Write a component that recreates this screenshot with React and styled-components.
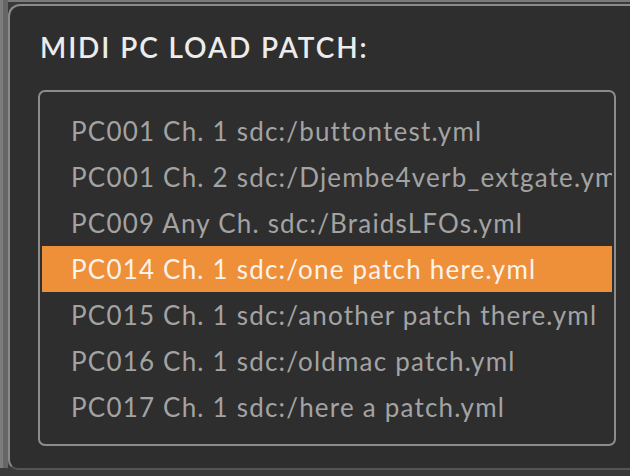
import React from "react";
import styled, { createGlobalStyle } from "styled-components";

const Global = createGlobalStyle`
  html, body {
    margin: 0;
    padding: 0;
    width: 630px;
    height: 476px;
    overflow: hidden;
    background: #1c1c1c;
  }
`;

const Frame = styled.div`
  width: 630px;
  height: 476px;
  box-sizing: border-box;
  padding: 4px 0 0 0;
  background: linear-gradient(to bottom, #7a7a7a 0, #7a7a7a 2px, #3a3a3a 2px);
  display: flex;
`;

const Side = styled.div`
  width: 8px;
  flex: none;
  background: linear-gradient(to right, #7c7c7c 0, #7c7c7c 3px, #666 3px);
  margin-top: -4px;
  height: 468px;
`;

const Panel = styled.div`
  flex: 1;
  height: 466px;
  margin-right: -12px;
  box-sizing: border-box;
  background: #2e2e2e;
  border: 2px solid #8a8a8a;
  border-right: none;
  border-bottom-color: #555;
  border-radius: 12px 0 0 10px;
  padding: 24px 0 0 30px;
  display: flex;
  flex-direction: column;
  font-family: "Lato", "Open Sans", sans-serif;
`;

const Title = styled.h1`
  margin: 0;
  font-size: 28px;
  font-weight: 600;
  color: #ececec;
  line-height: 35px;
  letter-spacing: 1.9px;
`;

const ListBox = styled.div`
  margin: 25px 0 0 -2px;
  width: 578px;
  height: 356px;
  box-sizing: border-box;
  border: 2px solid #8c8c8c;
  border-radius: 7px;
  padding: 16px 2px 14px 2px;
  overflow: hidden;
  display: flex;
  flex-direction: column;
`;

const Row = styled.div`
  height: 46px;
  flex: none;
  display: flex;
  align-items: center;
  padding-left: 29px;
  white-space: nowrap;
  overflow: hidden;
  font-size: 26px;
  letter-spacing: 1.2px;
  color: ${(p) => (p.$selected ? "#fbf3ea" : "#a3a3a3")};
  background: ${(p) => (p.$selected ? "#ee8f3a" : "transparent")};
`;

const items = [
  "PC001 Ch. 1 sdc:/buttontest.yml",
  "PC001 Ch. 2 sdc:/Djembe4verb_extgate.yml",
  "PC009 Any Ch. sdc:/BraidsLFOs.yml",
  "PC014 Ch. 1 sdc:/one patch here.yml",
  "PC015 Ch. 1 sdc:/another patch there.yml",
  "PC016 Ch. 1 sdc:/oldmac patch.yml",
  "PC017 Ch. 1 sdc:/here a patch.yml",
];

export default function App() {
  return (
    <>
      <Global />
      <Frame>
        <Side />
        <Panel>
          <Title>MIDI PC LOAD PATCH:</Title>
          <ListBox>
            {items.map((t, i) => (
              <Row key={i} $selected={i === 3}>
                {t}
              </Row>
            ))}
          </ListBox>
        </Panel>
      </Frame>
    </>
  );
}
